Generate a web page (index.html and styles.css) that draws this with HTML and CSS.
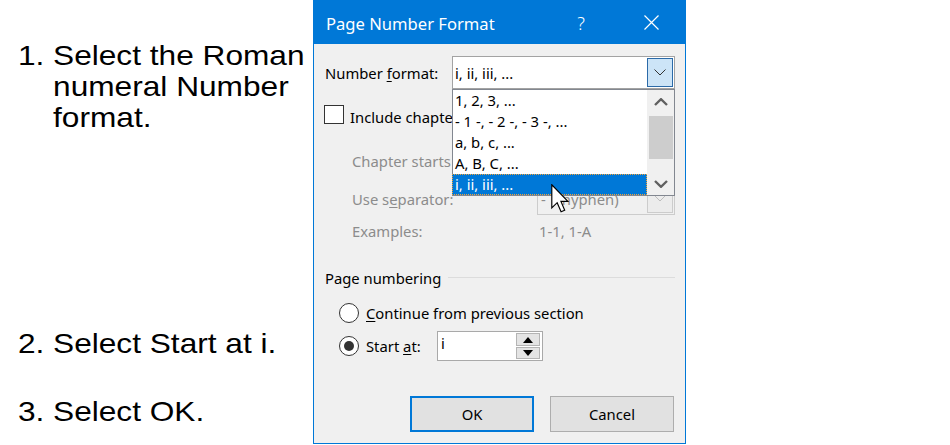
FILE: index.html
```html
<!DOCTYPE html>
<html>
<head>
<meta charset="utf-8">
<link rel="stylesheet" href="styles.css">
</head>
<body>
<div class="page">
  <div class="steps">
    <div class="step"><span class="num">1.</span><span class="text">Select the Roman<br>numeral Number<br>format.</span></div>
    <div class="step step-2"><span class="num">2.</span><span class="text">Select Start at i.</span></div>
    <div class="step step-3"><span class="num">3.</span><span class="text">Select OK.</span></div>
  </div>

  <div class="dialog">
    <div class="titlebar">
      <span class="title">Page Number Format</span>
      <span class="tb-btn help">?</span>
      <span class="tb-btn close">
        <svg width="15" height="15" viewBox="0 0 15 15"><path d="M0.5 0.5L14.5 14.5M14.5 0.5L0.5 14.5" stroke="#fff" stroke-width="1.2" fill="none"/></svg>
      </span>
    </div>

    <div class="body">
      <div class="row row-format">
        <span class="format-label">Number <u>f</u>ormat:</span>
        <div class="combo combo-active">
          <span class="combo-text">i, ii, iii, ...</span>
          <span class="combo-btn">
            <svg width="12" height="7" viewBox="0 0 12 7"><path d="M0.5 0.5L6 6L11.5 0.5" stroke="#333" stroke-width="1" fill="none"/></svg>
          </span>
          <div class="dropdown">
            <div class="dd-items">
              <div class="dd-item">1, 2, 3, ...</div>
              <div class="dd-item">- 1 -, - 2 -, - 3 -, ...</div>
              <div class="dd-item">a, b, c, ...</div>
              <div class="dd-item">A, B, C, ...</div>
              <div class="dd-item sel">i, ii, iii, ...</div>
            </div>
            <div class="dd-scroll">
              <div class="sb-btn">
                <svg width="14" height="8" viewBox="0 0 14 8"><path d="M1 7L7 1.2L13 7" stroke="#606060" stroke-width="2.4" fill="none"/></svg>
              </div>
              <div class="sb-track"><div class="sb-thumb"></div></div>
              <div class="sb-btn">
                <svg width="14" height="8" viewBox="0 0 14 8"><path d="M1 1L7 6.8L13 1" stroke="#606060" stroke-width="2.4" fill="none"/></svg>
              </div>
            </div>
          </div>
        </div>
      </div>

      <div class="row row-check">
        <span class="checkbox"></span>
        <span class="check-label">Include chapte</span>
      </div>

      <div class="row row-indent row-chapter">
        <span class="sub-label dis">Chapter starts</span>
        <div class="combo combo-dis">
          <span class="combo-text"></span>
          <span class="combo-btn">
            <svg width="12" height="7" viewBox="0 0 12 7"><path d="M0.5 0.5L6 6L11.5 0.5" stroke="#bdbdbd" stroke-width="1" fill="none"/></svg>
          </span>
        </div>
      </div>

      <div class="row row-indent row-sep">
        <span class="sub-label dis">Use s<u>e</u>parator:</span>
        <div class="combo combo-dis">
          <span class="combo-text">-&nbsp;&nbsp;&nbsp;(hyphen)</span>
          <span class="combo-btn">
            <svg width="12" height="7" viewBox="0 0 12 7"><path d="M0.5 0.5L6 6L11.5 0.5" stroke="#bdbdbd" stroke-width="1" fill="none"/></svg>
          </span>
        </div>
      </div>

      <div class="row row-indent row-examples">
        <span class="sub-label dis">Examples:</span>
        <span class="dis examples-val">1-1, 1-A</span>
      </div>

      <div class="row row-group">
        <span class="group-title">Page numbering</span>
        <span class="group-line"></span>
      </div>

      <div class="row row-radio row-radio1">
        <span class="radio"></span>
        <span class="radio-label"><u>C</u>ontinue from previous section</span>
      </div>

      <div class="row row-radio row-radio2">
        <span class="radio checked"><span class="dot"></span></span>
        <span class="radio-label start-label">Start <u>a</u>t:</span>
        <div class="spin">
          <span class="spin-text">i</span>
          <div class="spin-btns">
            <span class="spin-btn up"><svg width="10" height="6" viewBox="0 0 10 6"><path d="M0 6L5 0L10 6Z" fill="#000"/></svg></span>
            <span class="spin-btn down"><svg width="10" height="6" viewBox="0 0 10 6"><path d="M0 0L10 0L5 6Z" fill="#000"/></svg></span>
          </div>
        </div>
      </div>

      <div class="row row-buttons">
        <span class="btn btn-ok">OK</span>
        <span class="btn">Cancel</span>
      </div>
    </div>

    <svg class="cursor" width="19" height="29" viewBox="0 0 13 20">
      <path d="M0.5 0.5L0.5 16.5L4.2 12.9L6.9 19.2L9.4 18.1L6.8 12L11.6 12Z" fill="#fff" stroke="#000" stroke-width="0.8" stroke-linejoin="miter"/>
    </svg>
  </div>
</div>
</body>
</html>
```

FILE: styles.css
```css
* { box-sizing: border-box; }

html, body {
  margin: 0;
  padding: 0;
  background: #fff;
}

body {
  width: 950px;
  height: 445px;
  overflow: hidden;
}

.page {
  display: flex;
  align-items: flex-start;
}

/* ---------- left instructions ---------- */
.steps {
  width: 313px;
  flex: none;
  padding: 40px 0 0 18px;
  font-family: "Liberation Sans", Arial, sans-serif;
  font-size: 28px;
  line-height: 31px;
  color: #000;
}

.step {
  display: flex;
  white-space: nowrap;
  transform: scaleX(1.13);
  transform-origin: 0 0;
}

.step .num {
  width: 31px;
  flex: none;
}

.step-2 { margin-top: 195px; }
.step-3 { margin-top: 37px; }

/* ---------- dialog ---------- */
.dialog {
  position: relative;
  width: 373px;
  height: 444px;
  flex: none;
  background: #f0f0f0;
  border: 1px solid #0078d7;
  border-top: 0;
  font-family: "Noto Sans", "Open Sans", sans-serif;
  font-size: 14.8px;
  line-height: 20px;
  color: #000;
}

.titlebar {
  height: 44px;
  background: #0078d7;
  color: #fff;
  display: flex;
  align-items: center;
  padding: 0 11px 0 12px;
}

.title {
  flex: 1;
  font-size: 16.6px;
  padding-top: 3px;
  white-space: nowrap;
}

.tb-btn {
  width: 46px;
  height: 44px;
  display: flex;
  align-items: center;
  justify-content: center;
}

.help {
  margin-right: 24px;
  font-size: 18px;
  font-weight: 300;
  padding-top: 1px;
}

.body {
  padding: 0 10px 0 11px;
}

.row {
  display: flex;
  align-items: center;
}

.dis { color: #8c8c8c; }

u {
  text-decoration: underline;
  text-decoration-thickness: 1px;
  text-underline-offset: 2px;
}

/* number format row */
.row-format {
  margin-top: 12px;
  height: 33px;
}

.format-label {
  width: 127px;
  flex: none;
  white-space: nowrap;
}

.combo {
  position: relative;
  height: 33px;
  border: 1px solid;
  display: flex;
  align-items: center;
  flex: none;
}

.combo-text {
  flex: 1;
  padding-left: 2px;
  white-space: nowrap;
  overflow: hidden;
}

.combo-btn {
  width: 26px;
  height: 29px;
  margin: 0 1px;
  border: 1px solid;
  display: flex;
  align-items: center;
  justify-content: center;
  flex: none;
}

.combo-active {
  width: 223px;
  background: #fff;
  border-color: #a3a3a3;
}

.combo-active .combo-btn {
  background: #cce4f7;
  border-color: #2b6aa8;
}

.combo-dis {
  width: 138px;
  background: #f0f0f0;
  border-color: #cccccc;
  color: #8c8c8c;
}

.combo-dis .combo-text { padding-left: 3px; }

.combo-dis .combo-btn {
  background: #ececec;
  border-color: #cccccc;
}

/* dropdown list */
.dropdown {
  position: absolute;
  left: -1px;
  top: 32px;
  width: 223px;
  height: 107px;
  border: 1px solid #828790;
  background: #fff;
  display: flex;
  z-index: 5;
}

.dd-items {
  width: 194px;
  flex: none;
}

.dd-item {
  height: 21px;
  line-height: 21px;
  padding-left: 2px;
  white-space: nowrap;
  color: #000;
}

.dd-item.sel {
  background: #0078d7;
  color: #fff;
  margin-left: -1px;
  padding-left: 3px;
  outline: 1px dotted #f2a33a;
  outline-offset: -1px;
}

.dd-scroll {
  width: 27px;
  flex: none;
  background: #f0f0f0;
  display: flex;
  flex-direction: column;
}

.sb-btn {
  height: 23px;
  display: flex;
  align-items: center;
  justify-content: center;
  flex: none;
}

.sb-track {
  flex: 1;
  padding: 3px 1px 0 2px;
}

.sb-thumb {
  height: 43px;
  background: #cdcdcd;
}

/* checkbox row */
.row-check {
  margin-top: 16px;
  height: 19px;
  align-items: flex-start;
}

.checkbox {
  width: 20px;
  height: 19px;
  margin-left: -1px;
  border: 1px solid #333;
  background: #fff;
  flex: none;
}

.check-label {
  margin-left: 6px;
  margin-top: 2px;
  white-space: nowrap;
}

/* disabled indented rows */
.row-indent { padding-left: 27px; }

.sub-label {
  width: 185px;
  flex: none;
  white-space: nowrap;
}

.row-chapter { margin-top: 20px; height: 33px; }
.row-sep { margin-top: 5px; height: 33px; }
.row-examples { margin-top: 6px; height: 20px; }

.examples-val { padding-left: 2px; }

/* page numbering group */
.row-group {
  margin-top: 27px;
  height: 20px;
  align-items: flex-start;
}

.group-title { white-space: nowrap; }

.group-line {
  flex: 1;
  height: 1px;
  margin: 9px 0 0 7px;
  background: #dcdcdc;
}

.row-radio { padding-left: 14px; }
.row-radio1 { margin-top: 15px; height: 20px; }
.row-radio2 { margin-top: 8px; height: 30px; }

.radio {
  width: 20px;
  height: 20px;
  border-radius: 50%;
  border: 1px solid #333;
  background: #fff;
  flex: none;
  display: flex;
  align-items: center;
  justify-content: center;
}

.radio .dot {
  width: 10px;
  height: 10px;
  border-radius: 50%;
  background: #333;
}

.radio-label {
  margin-left: 7px;
  white-space: nowrap;
}

.start-label {
  width: 71px;
  flex: none;
}

.spin {
  width: 106px;
  height: 30px;
  border: 1px solid #a9a9a9;
  background: #fff;
  display: flex;
  align-items: flex-start;
  flex: none;
}

.spin-text {
  flex: 1;
  padding: 1px 0 0 3px;
}

.spin-btns {
  display: flex;
  flex-direction: column;
  gap: 1px;
  margin: 1px 2px 0 0;
}

.spin-btn {
  width: 24px;
  height: 13px;
  border: 1px solid #b4b4b4;
  background: #e4e4e4;
  display: flex;
  align-items: center;
  justify-content: center;
}

.spin-btn.down { height: 12px; }

/* buttons */
.row-buttons {
  margin-top: 35px;
  height: 36px;
  justify-content: flex-end;
  gap: 16px;
  padding-right: 1px;
}

.btn {
  width: 124px;
  height: 36px;
  background: #e1e1e1;
  border: 1px solid #adadad;
  display: flex;
  align-items: center;
  justify-content: center;
}

.btn-ok { border: 2px solid #0078d7; }

/* mouse pointer overlay */
.cursor {
  position: absolute;
  left: 237px;
  top: 184px;
  z-index: 10;
}
```
